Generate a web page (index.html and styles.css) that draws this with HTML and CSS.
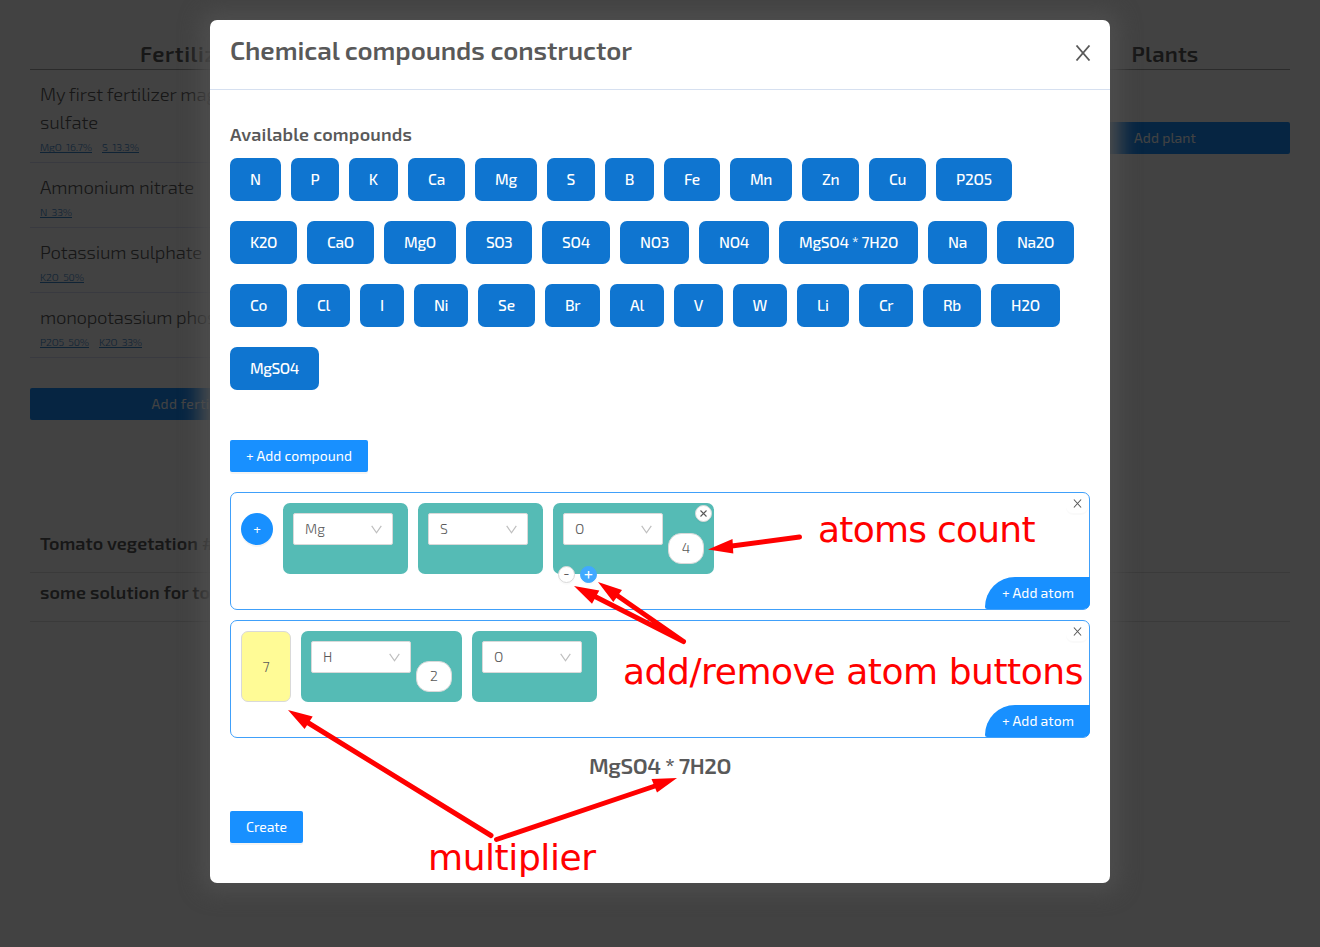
FILE: index.html
```html
<!DOCTYPE html>
<html lang="en">
<head>
<meta charset="utf-8">
<title>Chemical compounds constructor</title>
<link rel="stylesheet" href="styles.css">
</head>
<body>
<div class="page">
  <div class="columns">
    <section class="col-fertilizers">
      <h2 class="col-title"><span data-w="111">Fertilizers</span></h2>
      <div class="item"><div class="item-name"><span data-w="166">My first fertilizer ma</span>gnesium<br><span data-w="58">sulfate</span></div><div class="tags"><span class="tag" data-w="52">MgO&nbsp; 16.7%</span><span class="tag" data-w="37">S&nbsp; 13.3%</span></div></div>
      <div class="item"><div class="item-name"><span data-w="154">Ammonium nitrate</span></div><div class="tags"><span class="tag" data-w="32">N&nbsp; 33%</span></div></div>
      <div class="item"><div class="item-name"><span data-w="162">Potassium sulphate</span></div><div class="tags"><span class="tag" data-w="44">K2O&nbsp; 50%</span></div></div>
      <div class="item"><div class="item-name"><span data-w="167">monopotassium pho</span>sphate</div><div class="tags"><span class="tag" data-w="49">P2O5&nbsp; 50%</span><span class="tag" data-w="43">K2O&nbsp; 33%</span></div></div>
      <div class="wide-btn"><span data-w="88">Add fertilizer</span></div>
    </section>
    <section class="col-plants">
      <h2 class="col-title"><span data-w="67">Plants</span></h2>
      <div class="wide-btn"><span data-w="62">Add plant</span></div>
    </section>
  </div>
  <div class="solutions">
    <div class="solution"><span data-w="158">Tomato vegetation</span> #1</div>
    <div class="solution"><span data-w="170">some solution for to</span>mato</div>
  </div>
</div>

<div class="overlay">
  <div class="modal">
    <header class="modal-head">
      <h1 class="modal-title"><span data-w="402">Chemical compounds constructor</span></h1>
      <svg class="close" width="16" height="16" viewBox="0 0 16 16"><path d="M1.5 .5 14.5 15.5M14.5 .5 1.5 15.5"/></svg>
    </header>
    <div class="modal-body">
      <h3 class="subtitle"><span data-w="182">Available compounds</span></h3>
      <div class="chips" id="chips"></div>
      <div class="btn"><span data-w="106">+ Add compound</span></div>

      <div class="card">
        <div class="plus-round">+</div>
        <div class="atom"><div class="select"><span data-w="20">Mg</span><svg class="chev" width="11" height="9" viewBox="0 0 11 9"><path d="M.7 .8 5.5 7.8 10.3 .8"/></svg></div></div>
        <div class="atom"><div class="select"><span>S</span><svg class="chev" width="11" height="9" viewBox="0 0 11 9"><path d="M.7 .8 5.5 7.8 10.3 .8"/></svg></div></div>
        <div class="atom"><div class="select"><span>O</span><svg class="chev" width="11" height="9" viewBox="0 0 11 9"><path d="M.7 .8 5.5 7.8 10.3 .8"/></svg></div><div class="count">4</div>
          <div class="dot dot-close"><svg width="7" height="7" viewBox="0 0 7 7"><path d="M.5 .5 6.5 6.5M6.5 .5 .5 6.5"/></svg></div>
          <div class="dot dot-minus">-</div>
          <div class="dot dot-plus">+</div>
        </div>
        <div class="card-close"><svg width="9" height="9" viewBox="0 0 9 9"><path d="M.9 .5 8.1 8.5M8.1 .5 .9 8.5"/></svg></div>
        <div class="add-atom"><span data-w="72">+ Add atom</span></div>
      </div>

      <div class="card">
        <div class="multiplier">7</div>
        <div class="atom"><div class="select"><span>H</span><svg class="chev" width="11" height="9" viewBox="0 0 11 9"><path d="M.7 .8 5.5 7.8 10.3 .8"/></svg></div><div class="count">2</div></div>
        <div class="atom"><div class="select"><span>O</span><svg class="chev" width="11" height="9" viewBox="0 0 11 9"><path d="M.7 .8 5.5 7.8 10.3 .8"/></svg></div></div>
        <div class="card-close"><svg width="9" height="9" viewBox="0 0 9 9"><path d="M.9 .5 8.1 8.5M8.1 .5 .9 8.5"/></svg></div>
        <div class="add-atom"><span data-w="72">+ Add atom</span></div>
      </div>

      <div class="formula"><span data-w="142">MgSO4 * 7H2O</span></div>
      <div class="btn"><span data-w="41">Create</span></div>
    </div>
  </div>
</div>

<svg class="notes" width="1320" height="947" viewBox="0 0 1320 947">
  <g class="note-lines">
    <path d="M799.500 537 728 546.500M683.500 641.500 594 596M683.500 641.500 615 594M491 835.500 306 721.500M496.500 839.500 658 785"/>
  </g>
  <g class="note-heads">
    <path d="M708 549.500 732.500 539 733.300 553.500ZM574 586 599.300 590.500 592 603.700ZM598 582 622 590 613.300 602ZM288 710 312.700 716.500 304.600 729ZM677 778 651.500 779 657 792.500Z"/>
  </g>
  <g class="note-text">
    <text x="818" y="542" textLength="217.500">atoms count</text>
    <text x="623" y="684" textLength="460.500">add/remove atom buttons</text>
    <text x="428" y="870" textLength="168">multiplier</text>
  </g>
</svg>
<script src="app.js"></script>
</body>
</html>
```
FILE: styles.css
```css
* { box-sizing: border-box; }
body { margin: 0; width: 1320px; height: 947px; overflow: hidden; position: relative; background: #fff; color: #595959; font-family: "Exo 2", "Noto Sans", sans-serif; font-size: 14px; }
h1, h2, h3 { margin: 0; font-weight: 600; }
span { white-space: nowrap; }
.page { padding: 38px 30px 0; }
.columns { display: flex; justify-content: space-between; height: 482px; }
.col-fertilizers { width: 331px; }
.col-plants { width: 250px; }
.col-title { height: 32px; line-height: 30px; font-size: 22px; text-align: center; border-bottom: 1px solid #a6a6a6; }
.item { padding: 10px 10px 0; height: 65px; border-bottom: 1px solid #dae1f6; }
.item:nth-of-type(1) { height: 93px; }
.item-name { font-size: 18.500px; line-height: 28px; font-weight: 300; white-space: nowrap; }
.tags { display: flex; gap: 10px; }
.tag { display: block; height: 17px; line-height: 22px; font-size: 10.500px; font-weight: 300; color: #4288cc; border-bottom: 1px solid #3a86cc; }
.wide-btn { height: 32px; margin-top: 30px; line-height: 32px; text-align: center; color: #fff; background: #1890ff; border-radius: 2px; }
.col-plants .wide-btn { margin-top: 52px; }
.solution { height: 49px; padding: 0 10px; line-height: 39px; font-size: 18px; font-weight: 600; border-bottom: 1px solid #e0e0e0; white-space: nowrap; }
.solution:first-child { height: 53px; line-height: 46px; }

.overlay { position: absolute; inset: 0; padding: 20px 210px; background: rgba(0,0,0,.74); }
.modal { width: 900px; height: 863px; background: #fff; border-radius: 7px; box-shadow: 0 0 20px 10px #4d4d4d; }
.modal-head { display: flex; justify-content: space-between; height: 70px; padding: 0 19px 0 20px; border-bottom: 1px solid #d6e0f0; }
.modal-title { font-size: 26px; line-height: 60px; }
.close { margin-top: 25px; fill: none; stroke: #595959; stroke-width: 1.8; }
.modal-body { padding: 31px 20px 0; }
.subtitle { font-size: 18px; line-height: 27px; height: 37px; }
.chips { display: flex; flex-wrap: wrap; gap: 20px 10px; height: 282px; padding-right: 10px; align-content: flex-start; }
.chip { height: 43px; line-height: 43px; border-radius: 7px; background: #0f75d0; color: #fff; font-size: 15.500px; font-weight: 500; text-align: center; }
.btn { display: inline-block; height: 32px; padding: 0 16px; line-height: 32px; color: #fff; background: #1890ff; border-radius: 2px; box-shadow: 0 2px 0 rgba(0,0,0,.045); vertical-align: top; }
.card { position: relative; display: flex; gap: 10px; align-items: flex-start; height: 118px; margin-top: 20px; padding: 10px; border: 1px solid #40a0fa; border-radius: 7px; }
.card + .card { margin-top: 10px; }
.plus-round { width: 32px; height: 32px; margin-top: 10px; line-height: 31px; text-align: center; color: #fff; background: #1890ff; border-radius: 50%; box-shadow: 0 2px 0 rgba(0,0,0,.045); }
.atom { position: relative; display: flex; gap: 5px; height: 71px; min-width: 125px; padding: 10px; background: #55bbb5; border-radius: 7px; }
.select { display: flex; justify-content: space-between; align-items: flex-start; width: 100px; height: 32px; padding: 0 10px 0 11px; line-height: 29px; background: #fff; border: 1px solid #d9d9d9; border-radius: 2px; font-weight: 300; }
.chev { margin-top: 11px; fill: none; stroke: #bfbfbf; stroke-width: 1.2; }
.count { width: 36px; height: 31px; margin-top: 20px; line-height: 28px; text-align: center; background: #fff; border: 1px solid #d9d9d9; border-radius: 13px; font-weight: 300; }
.dot { position: absolute; display: flex; align-items: center; justify-content: center; width: 17px; height: 17px; border: 1px solid #d9d9d9; border-radius: 50%; background: #fff; font-size: 14px; line-height: 14px; box-shadow: 0 2px 0 rgba(0,0,0,.02); }
.dot svg, .card-close svg { fill: none; stroke: #595959; stroke-width: 1.1; }
.dot-close { left: 142px; top: 2px; }
.dot-minus { left: 5px; top: 63px; padding-bottom: 4px; }
.dot-plus { left: 27px; top: 63px; padding-bottom: 3px; font-size: 17px; font-weight: 500; color: #fff; background: #40a9ff; border-color: #40a9ff; }
.card-close { position: absolute; right: 1px; top: 0; width: 22px; height: 20px; padding: 6px 0 0 7px; line-height: 0; border-radius: 7px; box-shadow: 0 2px 0 rgba(0,0,0,.018); }
.add-atom { position: absolute; right: -1px; bottom: 0; width: 105px; height: 32px; padding-left: 17px; line-height: 32px; color: #fff; background: #1890ff; border-radius: 30px 0 6px 2px; }
.multiplier { width: 50px; height: 71px; line-height: 70px; text-align: center; background: #fffb96; border: 1px solid #d9d9d9; border-radius: 7px; font-weight: 300; }
.formula { height: 73px; line-height: 54px; text-align: center; font-size: 22px; font-weight: 600; }
.notes { position: absolute; left: 0; top: 0; }
.note-lines { fill: none; stroke: #f00; stroke-width: 5; stroke-linecap: round; }
.note-heads { fill: #f00; }
.note-text { fill: #f00; font: 36px "DejaVu Sans", sans-serif; }
```
FILE: app.js
```js
// Compounds on offer: label and button width.
const compounds = [
  ["N", 51], ["P", 48], ["K", 49], ["Ca", 57], ["Mg", 62], ["S", 48], ["B", 49], ["Fe", 56], ["Mn", 62], ["Zn", 57], ["Cu", 57], ["P2O5", 76],
  ["K2O", 67], ["CaO", 67], ["MgO", 72], ["SO3", 66], ["SO4", 68], ["NO3", 69], ["NO4", 70], ["MgSO4 * 7H2O", 139], ["Na", 59], ["Na2O", 77],
  ["Co", 57], ["Cl", 53], ["I", 44], ["Ni", 54], ["Se", 57], ["Br", 55], ["Al", 54], ["V", 49], ["W", 54], ["Li", 52], ["Cr", 54], ["Rb", 58], ["H2O", 69],
  ["MgSO4", 89]
];
const box = document.getElementById("chips");
for (const [label, width] of compounds) {
  const chip = document.createElement("div");
  chip.className = "chip";
  chip.style.width = width + "px";
  const text = document.createElement("span");
  text.textContent = label;
  if (label.length > 1) text.dataset.w = width - 40;
  chip.append(text);
  box.append(chip);
}

// Space the letters so that each label fills its set width.
for (const el of document.querySelectorAll("[data-w]")) {
  const range = document.createRange();
  range.selectNodeContents(el);
  const natural = range.getBoundingClientRect().width;
  el.style.letterSpacing = (el.dataset.w - natural) / el.textContent.length + "px";
}
```
